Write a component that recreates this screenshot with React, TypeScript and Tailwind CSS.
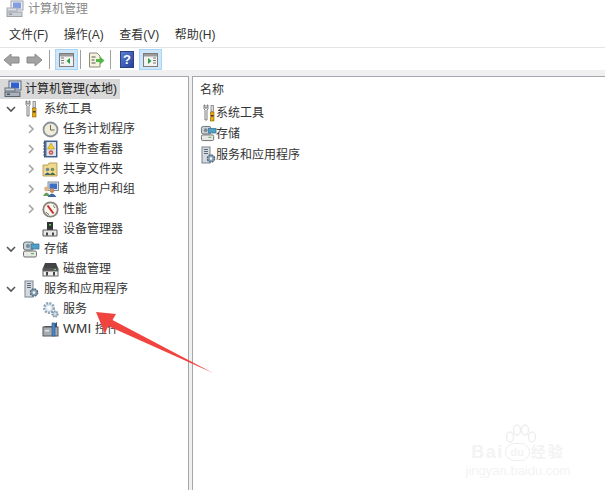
import React from "react";

const Chevron = ({ open, hidden }: { open?: boolean; hidden?: boolean }) => (
  <svg width="10" height="10" viewBox="0 0 10 10" className={hidden ? "invisible" : ""}>
    {open ? (
      <path d="M1 3 L5 7 L9 3" fill="none" stroke="#555" strokeWidth="1.6" />
    ) : (
      <path d="M3 1 L7 5 L3 9" fill="none" stroke="#a6a6a6" strokeWidth="1.6" />
    )}
  </svg>
);

const Computer = () => (
  <svg width="18" height="18" viewBox="0 0 18 18">
    <rect x="5" y="1" width="12" height="9" fill="#dfe4ea" stroke="#5c6a7a" />
    <rect x="7" y="2.5" width="8" height="6" fill="#2f5fd0" />
    <rect x="1" y="8" width="10" height="3" fill="#c9d0d8" stroke="#66707c" />
    <rect x="1" y="12" width="15" height="4.5" fill="#aab2bb" stroke="#5b6570" />
    <rect x="3" y="13.5" width="3" height="1.5" fill="#4a525c" />
  </svg>
);
const Tools = () => (
  <svg width="16" height="18" viewBox="0 0 16 18">
    <path d="M3 1 v4 l1 1 v10 h2 v-10 l1 -1 v-4 l-1 0 v3 h-2 v-3 z" fill="#f4f4f4" stroke="#666" strokeWidth="0.8" />
    <rect x="10" y="1.5" width="2.4" height="6" fill="#d8d8d8" stroke="#777" strokeWidth="0.7" />
    <rect x="9.5" y="8" width="3.5" height="9" fill="#eaa911" stroke="#8a6300" strokeWidth="0.6" />
    <rect x="10" y="11" width="2.5" height="1.5" fill="#333" />
  </svg>
);
const Clock = () => (
  <svg width="17" height="17" viewBox="0 0 17 17">
    <circle cx="8.5" cy="8.5" r="7" fill="#f1ecd8" stroke="#8a929a" strokeWidth="1.8" />
    <path d="M8.5 4 V9 H12.5" fill="none" stroke="#6a6a60" strokeWidth="1" />
  </svg>
);
const EventLog = () => (
  <svg width="16" height="18" viewBox="0 0 16 18">
    <rect x="2.5" y="1" width="12.5" height="16" fill="#4a6ea8" stroke="#2d4a78" strokeWidth="0.8" />
    <rect x="4.5" y="2" width="9.5" height="14" fill="#dfe3ea" />
    <path d="M9 3 L12.5 9 H5.5 Z" fill="#f4cf3a" stroke="#a57c00" strokeWidth="0.5" />
    <circle cx="9" cy="12.5" r="2.3" fill="#c9524c" />
    <circle cx="9" cy="12.5" r="0.8" fill="#eee" />
    <path d="M1 3 h2.5 M1 6 h2.5 M1 9 h2.5 M1 12 h2.5 M1 15 h2.5" stroke="#555" strokeWidth="0.9" />
  </svg>
);
const Share = () => (
  <svg width="16" height="16" viewBox="0 0 16 16">
    <path d="M1 4 h5 l1 -2 h8 v13 h-14 z" fill="#efd88f" stroke="#ab9040" strokeWidth="0.8" />
    <circle cx="5.5" cy="8.5" r="1.8" fill="#6c8c9a" />
    <circle cx="10.5" cy="8.5" r="1.8" fill="#788f58" />
    <path d="M2.5 14 q3 -5 6 0 z" fill="#3a6078" />
    <path d="M7.5 14 q3 -5 6 0 z" fill="#4c6e3c" />
  </svg>
);
const Users = () => (
  <svg width="17" height="17" viewBox="0 0 17 17">
    <rect x="6" y="1" width="10.5" height="8.5" fill="#dfe4ea" stroke="#67727e" strokeWidth="0.8" />
    <rect x="7.5" y="2.5" width="7.5" height="5.5" fill="#3d6fc9" />
    <circle cx="4.5" cy="8" r="2.4" fill="#dcb488" />
    <path d="M1 15 q3.5 -7 7 0 z" fill="#6a9a58" />
    <circle cx="10" cy="9.5" r="2.4" fill="#c4925e" />
    <path d="M5.5 16 q4.5 -7 9 0 z" fill="#3a6a9e" />
  </svg>
);
const Perf = () => (
  <svg width="17" height="17" viewBox="0 0 17 17">
    <circle cx="8.5" cy="8.5" r="7.2" fill="#f7f6f0" stroke="#8a8376" strokeWidth="1.8" />
    <path d="M5.5 4.5 L11.5 12.5" stroke="#cc2b25" strokeWidth="2" />
    <path d="M4 11 a5 5 0 0 0 3 2.5" stroke="#666" fill="none" />
    <path d="M11 4.5 a5 5 0 0 1 2 2.5" stroke="#666" fill="none" />
  </svg>
);
const Device = () => (
  <svg width="16" height="16" viewBox="0 0 16 16">
    <rect x="5" y="1" width="6" height="8" fill="#333" />
    <rect x="7" y="3" width="2" height="1.5" fill="#5ccf5c" />
    <path d="M1 9 H15 V15 H1 Z" fill="#e8e8e8" stroke="#5b5b5b" />
    <rect x="4" y="11.5" width="2" height="3" fill="#444" />
    <rect x="10" y="11.5" width="2" height="3" fill="#444" />
  </svg>
);
const Storage = () => (
  <svg width="18" height="17" viewBox="0 0 18 17">
    <rect x="1.5" y="1" width="10" height="8" rx="2" fill="#c9d3d6" stroke="#66727a" />
    <circle cx="6" cy="5" r="2" fill="#7d8b93" />
    <rect x="9" y="3" width="8" height="5" fill="#4da0c8" stroke="#3b6d8d" strokeWidth="0.7" />
    <rect x="1.5" y="10" width="13" height="6" rx="1.5" fill="#e8e8e4" stroke="#6c6c6c" />
    <rect x="9" y="12" width="3" height="1.2" fill="#5eb65e" />
  </svg>
);
const Disk = () => (
  <svg width="17" height="15" viewBox="0 0 17 15">
    <path d="M3 1 H14 L16 6 H1 Z" fill="#444" />
    <rect x="0.5" y="6" width="16" height="3" fill="#555" />
    <rect x="12" y="7" width="2" height="1" fill="#6fe06f" />
    <rect x="1" y="9" width="15" height="5" fill="#f1f1f1" stroke="#666" />
    <rect x="4" y="10" width="2" height="3.5" fill="#444" />
    <rect x="11" y="10" width="2" height="3.5" fill="#444" />
  </svg>
);
const Services = () => (
  <svg width="15" height="18" viewBox="0 0 15 18">
    <rect x="1" y="1" width="8" height="16" fill="#d4dae0" stroke="#78838e" />
    <path d="M3 3.5 h4 M3 5.5 h4 M3 7.5 h4" stroke="#5f6a75" />
    <circle cx="10" cy="12.5" r="3.6" fill="#8aa2b5" stroke="#536a7c" strokeWidth="1.4" strokeDasharray="2 0.8" />
    <circle cx="10" cy="12.5" r="1.2" fill="#fff" />
  </svg>
);
const Gears = () => (
  <svg width="17" height="17" viewBox="0 0 17 17">
    <circle cx="7" cy="7" r="4.8" fill="#dbe6ee" stroke="#8ea6b8" strokeWidth="2.4" strokeDasharray="2 1.2" />
    <circle cx="7" cy="7" r="1.9" fill="#fff" />
    <circle cx="13" cy="13" r="2.8" fill="#b4c5d2" stroke="#7b93a6" strokeWidth="1.6" strokeDasharray="1.4 1" />
    <circle cx="13" cy="13" r="0.8" fill="#fff" />
  </svg>
);
const Wmi = () => (
  <svg width="17" height="16" viewBox="0 0 17 16">
    <path d="M3 5 H10 L15 1 V7 H1 Z" fill="#4b4f55" />
    <rect x="1" y="6" width="15" height="9" fill="#a7adb3" stroke="#53585e" />
    <rect x="10" y="2" width="3" height="13" fill="#4a88c8" stroke="#22527f" strokeWidth="0.6" />
    <rect x="3" y="9" width="4" height="1.5" fill="#e5e5e5" />
  </svg>
);

const Row = ({ level, open, chevron, icon, children }: { level: 1 | 2; open?: boolean; chevron?: boolean; icon: React.ReactNode; children: React.ReactNode }) => (
  <div className={"flex h-5 items-center " + (level === 2 ? "pl-[26px]" : "pl-[6px]")}>
    <span className={"flex w-[10px] justify-center " + (level === 2 ? "mr-[5px]" : "mr-[6px]")}>
      <Chevron open={open} hidden={!chevron} />
    </span>
    <span className="mr-[4px] flex h-[18px] w-[18px] items-center justify-center">{icon}</span>
    <span className="text-[12px] leading-5 text-[#333]">{children}</span>
  </div>
);

const ToolBtn = ({ active, children }: { active?: boolean; children: React.ReactNode }) => (
  <span className={"flex h-[21px] w-[23px] items-center justify-center border " + (active ? "border-[#a6d5f7] bg-[#cde6f9]" : "border-transparent")}>{children}</span>
);

const Pane = ({ left }: { left?: boolean }) => (
  <svg width="15" height="14" viewBox="0 0 15 14">
    <rect x="0.5" y="0.5" width="14" height="13" fill="#f3f3f3" stroke="#7d7d7d" />
    <rect x="1" y="1" width="13" height="2.5" fill="#9a9a9a" />
    {left ? <path d="M2 5 h3 M2 7.5 h3 M2 10 h3" stroke="#777" /> : <path d="M10 5 h3 M10 7.5 h3 M10 10 h3" stroke="#777" />}
    {left ? <path d="M11 5 L7.5 8 L11 11 Z" fill="#2e9d3f" /> : <path d="M5 5 L8.5 8 L5 11 Z" fill="#2e9d3f" />}
  </svg>
);

const Arrow = ({ right }: { right?: boolean }) => (
  <svg width="17" height="14" viewBox="0 0 17 14">
    <path d={right ? "M1 4 H9 V1 L16 7 L9 13 V10 H1 Z" : "M16 4 H8 V1 L1 7 L8 13 V10 H16 Z"} fill="#a3a3a3" stroke="#8a8a8a" />
  </svg>
);

const Item = ({ icon, label }: { icon: React.ReactNode; label: string }) => (
  <div className="flex h-[21px] items-center">
    <span className="mr-[-1px] flex h-[18px] w-[17px] items-center justify-center">{icon}</span>
    <span className="text-[12px] text-[#333]">{label}</span>
  </div>
);

export default function App() {
  return (
    <div className="relative flex h-[490px] w-[605px] flex-col overflow-hidden bg-white font-['Liberation_Sans','Noto_Sans_CJK_SC',sans-serif] text-[#333]">
      <div className="flex h-[17px] shrink-0 items-center pl-[6px]">
        <span className="mr-[4px] opacity-60"><Computer /></span>
        <span className="text-[12px] text-[#888]">计算机管理</span>
      </div>
      <div className="mt-[6px] flex h-[24px] shrink-0 items-center gap-[15.5px] pl-[9px] text-[12px] text-[#333]">
        <span>文件(F)</span>
        <span>操作(A)</span>
        <span>查看(V)</span>
        <span>帮助(H)</span>
      </div>
      <div className="flex h-[23px] shrink-0 items-end border-t border-[#e4e4e4]">
        <span className="mb-[3px] flex w-[23px] justify-center"><Arrow /></span>
        <span className="mb-[3px] flex w-[23px] justify-center"><Arrow right /></span>
        <span className="mb-[1px] ml-[3px] mr-[5px] h-[19px] w-px bg-[#a0a0a0]" />
        <ToolBtn active><Pane left /></ToolBtn>
        <span className="mb-[1px] ml-[2px] mr-[4px] h-[19px] w-px bg-[#a0a0a0]" />
        <ToolBtn>
          <svg width="17" height="16" viewBox="0 0 17 16">
            <path d="M1.5 1 H9 L12 4 V15 H1.5 Z" fill="#f6f3dc" stroke="#8b8b7a" />
            <path d="M3.5 5 h4 M3.5 8 h3 M3.5 11 h4" stroke="#555" />
            <path d="M8 7 H12 V4.5 L16.5 8.5 L12 12.5 V10 H8 Z" fill="#55b748" />
          </svg>
        </ToolBtn>
        <span className="mb-[1px] ml-[2px] mr-[4px] h-[19px] w-px bg-[#a0a0a0]" />
        <ToolBtn>
          <svg width="14" height="17" viewBox="0 0 14 17">
            <defs>
              <linearGradient id="helpFill" x1="0" y1="0" x2="1" y2="1">
                <stop offset="0" stopColor="#5f83d6" />
                <stop offset="1" stopColor="#233f96" />
              </linearGradient>
            </defs>
            <rect x="0.5" y="0.5" width="13" height="16" fill="url(#helpFill)" stroke="#2a3f86" />
            <text x="7" y="13" textAnchor="middle" fontSize="13" fontWeight="700" fill="#fff" fontFamily="Liberation Sans">?</text>
          </svg>
        </ToolBtn>
        <span className="w-px" />
        <ToolBtn active><Pane /></ToolBtn>
      </div>
      <div className="flex min-h-0 flex-1 bg-[#f0f0f0] pt-[6px]">
        <div className="w-[189px] shrink-0 border-r border-t border-[#a3a7ad] bg-white pt-[2px]">
          <div className="flex h-[20px] w-[120px] items-center bg-[#d9d9d9] pl-[4px]">
            <span className="mr-[3px]"><Computer /></span>
            <span className="text-[12px] text-[#222]">计算机管理(本地)</span>
          </div>
          <Row level={1} open chevron icon={<Tools />}>系统工具</Row>
          <Row level={2} chevron icon={<Clock />}>任务计划程序</Row>
          <Row level={2} chevron icon={<EventLog />}>事件查看器</Row>
          <Row level={2} chevron icon={<Share />}>共享文件夹</Row>
          <Row level={2} chevron icon={<Users />}>本地用户和组</Row>
          <Row level={2} chevron icon={<Perf />}>性能</Row>
          <Row level={2} icon={<Device />}>设备管理器</Row>
          <Row level={1} open chevron icon={<Storage />}>存储</Row>
          <Row level={2} icon={<Disk />}>磁盘管理</Row>
          <Row level={1} open chevron icon={<Services />}>服务和应用程序</Row>
          <Row level={2} icon={<Gears />}>服务</Row>
          <Row level={2} icon={<Wmi />}><span className="text-[13.5px] tracking-[0.3px]">WMI</span> 控件</Row>
        </div>
        <div className="ml-[3px] flex-1 border-l border-t border-[#a3a7ad] bg-white pl-[7px] pt-[3px]">
          <div className="h-[22px] text-[12px] leading-[20px]">名称</div>
          <Item icon={<Tools />} label="系统工具" />
          <Item icon={<Storage />} label="存储" />
          <Item icon={<Services />} label="服务和应用程序" />
        </div>
      </div>
      {/* red annotation arrow laid over the screenshot */}
      <svg className="absolute left-0 top-0" width="605" height="490" viewBox="0 0 605 490">
        <path d="M96 312 L116 314 L112.5 320 L213 373 L108 326 L105 334 Z" fill="#f2443f" />
      </svg>
      {/* watermark */}
      <div className="absolute left-[463px] top-[424px] flex w-[110px] flex-col items-center text-[#f3f3f3]">
        <svg width="34" height="24" viewBox="0 0 34 24" className="mb-[-6px] ml-[4px]">
          <ellipse cx="7" cy="13" rx="3.5" ry="5" fill="none" stroke="#eeeeee" strokeWidth="1.4" />
          <ellipse cx="14" cy="6" rx="3.5" ry="5" fill="none" stroke="#eeeeee" strokeWidth="1.4" />
          <ellipse cx="22" cy="6" rx="3.5" ry="5" fill="none" stroke="#eeeeee" strokeWidth="1.4" />
          <ellipse cx="29" cy="13" rx="3.5" ry="5" fill="none" stroke="#eeeeee" strokeWidth="1.4" />
        </svg>
        <div className="flex h-[20px] items-center whitespace-nowrap text-[18px] font-bold leading-[20px] tracking-[1.5px]">
          <span>Bai</span>
          <span className="mx-[1px] flex h-[18px] w-[25px] items-center justify-center rounded-full border border-[#eeeeee] text-[11px] leading-none tracking-normal">du</span>
          <span className="text-[15px] tracking-[2px]">经验</span>
        </div>
        <div className="mt-[2px] whitespace-nowrap text-[13px] leading-[14px]">jingyan.baidu.com</div>
      </div>
    </div>
  );
}
